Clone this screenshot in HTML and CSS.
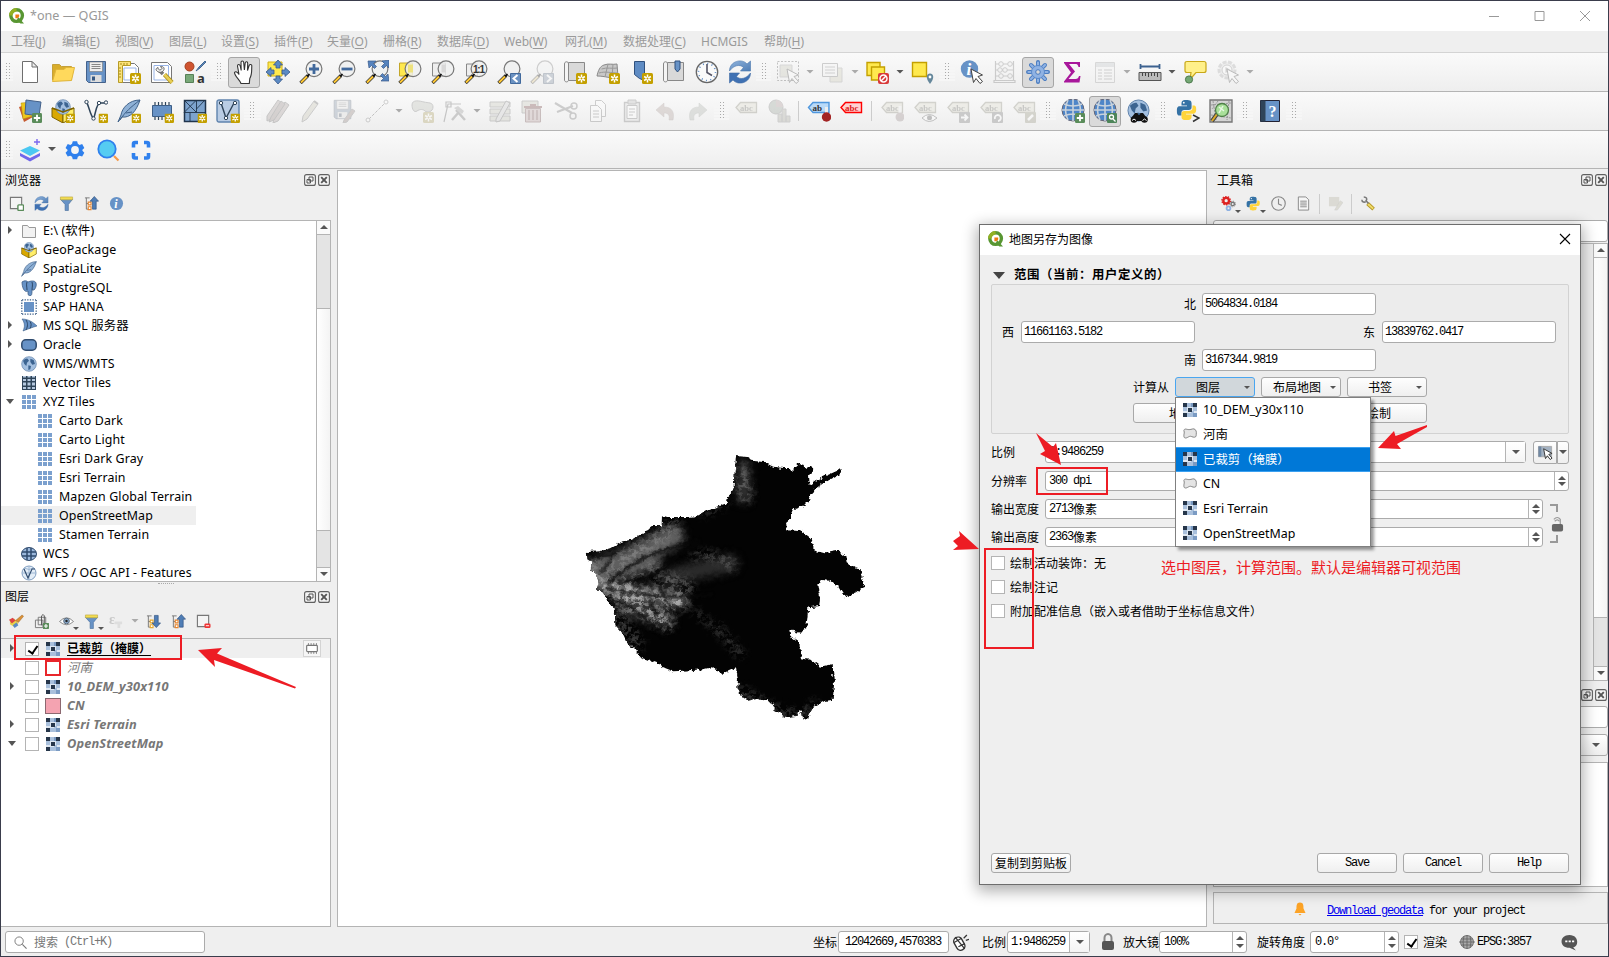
FILE: index.html
```html
<!DOCTYPE html>
<html lang="zh-CN">
<head>
<meta charset="utf-8">
<title>*one — QGIS</title>
<link rel="stylesheet" href="styles.css">
</head>
<body>
<svg class="defs" aria-hidden="true">
<defs>
<linearGradient id="gblue" x1="0" y1="0" x2="1" y2="1"><stop offset="0" stop-color="#8fb3dc"/><stop offset="1" stop-color="#4f7db5"/></linearGradient>
</defs>
<symbol id="logo" viewBox="0 0 16 16"><circle cx="7.6" cy="7.6" r="5.8" fill="none" stroke="#589632" stroke-width="3.4"/><path d="M7.6 1.8a5.8 5.8 0 0 0-5.8 5.8" fill="none" stroke="#93b023" stroke-width="3.4"/><path d="M9 9l6 6.6h-3.6L8 12z" fill="#589632"/><path d="M6.4 6.4h3.8v2l-1.8 1.8h-2z" fill="#ee7913"/></symbol>
<symbol id="star" viewBox="0 0 11 11"><rect width="11" height="11" rx="1.5" fill="#c4a000"/><path d="M5.5 1.6v7.8M2.1 3.5l6.8 4M8.9 3.5l-6.8 4" stroke="#fff" stroke-width="1.5"/><circle cx="5.5" cy="5.5" r="1" fill="#c4a000"/></symbol>
<symbol id="plusb" viewBox="0 0 11 11"><rect width="11" height="11" rx="1.5" fill="#5a8c5a"/><path d="M5.5 2v7M2 5.5h7" stroke="#fff" stroke-width="2"/></symbol>
<symbol id="new" viewBox="0 0 24 24"><path d="M4.500 1.500h9.500l5.500 5.500v15.500h-15z" fill="#fff" stroke="#6e6e6e"/><path d="M14 1.500V7h5.500z" fill="#eee" stroke="#6e6e6e"/></symbol>
<symbol id="open" viewBox="0 0 24 24"><path d="M1.500 20V4.500h7l2 2h10V20z" fill="#d9ad2b" stroke="#c4a03a"/><path d="M1.500 21.500L5 9.500h8l2-2h8.500l-3 13z" fill="#ffd95c" stroke="#e0b53a"/></symbol>
<symbol id="save" viewBox="0 0 24 24"><path d="M2.500 1.500h19v21H4.500l-2-2z" fill="#6792c6" stroke="#44618a"/><path d="M5.500 2h13v9.500h-13z" fill="#eee" stroke="#777" stroke-width=".6"/><path d="M7.500 4.500h9M7.500 6.500h9M7.500 8.500h9" stroke="#888"/><path d="M6.500 15h11v7h-11z" fill="#ddd"/><path d="M8 16.500h3v4H8z" fill="#355883"/></symbol>
<symbol id="layout" viewBox="0 0 24 24"><path d="M3.500 3.500h14l4 4v15h-18z" fill="#fff" stroke="#777"/><path d="M7 8h12v12H7z" fill="#fff" stroke="#99b5e8"/><path d="M1.500 1.500h12v4h-8v17h-4z" fill="#fbe37a" stroke="#b69b26"/><path d="M4 3v2M7 3v2M10 3v2M2 8h2M2 11h2M2 14h2M2 17h2" stroke="#a88b17"/><use href="#star" x="13" y="13" width="11" height="11"/></symbol>
<symbol id="manager" viewBox="0 0 24 24"><path d="M1.500 2.500h16l4 4v16h-20z" fill="#fff" stroke="#777"/><path d="M4 5.500h14.500v14.500H4z" fill="#fff" stroke="#99b5e8"/><path d="M13 14l-3.500-3.500" stroke="#777" stroke-width="3.500"/><path d="M8 7.500c0 3 3 3 4 1l-1.500-2c3-.5 4.500 2 3 4s-4 2.500-6 1-2-3 .5-4z" fill="#eee" stroke="#666"/><path d="M14.500 14.500l7.500 8" stroke="#a88b17" stroke-width="4.200"/><path d="M14.500 14.500l7.500 8" stroke="#e8cf55" stroke-width="2.600"/></symbol>
<symbol id="style" viewBox="0 0 24 24"><circle cx="6.500" cy="6.500" r="4.500" fill="#cf5430" stroke="#a3401f"/><path d="M13 11l3-4 6-6 1 1-6 6z" fill="#5b87b8" stroke="#466a94"/><path d="M2.500 14.500h8v8h-8z" fill="#78a878" stroke="#568056"/><text x="14" y="23" font-size="13" fill="#333" font-family="Noto Sans">a</text></symbol>
<symbol id="hand" viewBox="0 0 24 24"><path d="M9 23.500C8 20 2.500 16 2.500 12.500c1-1.500 3-.5 4.500 2L5.500 6c0-2 2.300-2 2.700 0l1 4.500L9 2.500c0-2 2.500-2 2.700 0l.7 7.500.8-7c.3-1.800 2.500-1.500 2.500.3L15.500 10.500l1.700-5.200c.7-1.500 2.800-.8 2.600.7-.3 4 .5 8.500-2 12.500l-.5 5z" fill="#fff" stroke="#333" stroke-width="1.100"/></symbol>
<symbol id="pansel" viewBox="0 0 24 24"><path d="M2 2h14v14H2z" fill="#ffe94e" stroke="#d0b018"/><path d="M12 0l4.500 5H14v3h-4V5H7.500zM12 24l4.500-5H14v-3h-4v3H7.500zM0 12l5-4.500V10h3v4H5v2.500zM24 12l-5-4.500V10h-3v4h3v2.500z" fill="#5b8ac4" stroke="#38598a" stroke-width=".8"/></symbol>
<symbol id="mag" viewBox="0 0 24 24"><path d="M9 15.500L1.500 23" stroke="#333" stroke-width="3.400"/><path d="M8 16.500L2 22.500" stroke="#ffc833" stroke-width="2"/><circle cx="15" cy="8.800" r="7.900" fill="#eef0f0" fill-opacity=".85" stroke="#777" stroke-width="1.200"/><path d="M7.500 15.500l2.500-2 1 1-2 2.500z" fill="#111"/></symbol>
<symbol id="zin" viewBox="0 0 24 24"><use href="#mag"/><path d="M15 4v10M10 9h10" stroke="#41699c" stroke-width="2.800"/></symbol>
<symbol id="zout" viewBox="0 0 24 24"><use href="#mag"/><path d="M9.500 9h11" stroke="#41699c" stroke-width="2.800"/></symbol>
<symbol id="zfull" viewBox="0 0 24 24"><use href="#mag"/><path d="M3 1h8L8.500 3.500l3 3-2 2-3-3L4 8zM24 0v8l-2.500-2.500-3 3-2-2 3-3L17 1zM24 21h-8l2.500-2.500-3-3 2-2 3 3L23 14z" fill="#5683bd" stroke="#38598a" stroke-width=".7"/></symbol>
<symbol id="zsel" viewBox="0 0 24 24"><path d="M1.500 3h13v13h-13z" fill="#ffe94e" stroke="#c4a72a"/><use href="#mag"/><path d="M10 4.500h5v8h-5z" fill="#eee27e"/></symbol>
<symbol id="zlay" viewBox="0 0 24 24"><path d="M1.500 3h13v13h-13z" fill="#eee" stroke="#888"/><use href="#mag"/><path d="M10.500 4.500h4.500v8h-4.500z" fill="#d8d8d8"/></symbol>
<symbol id="znat" viewBox="0 0 24 24"><path d="M2.500 4h11v12h-11z" fill="#eee" stroke="#888"/><use href="#mag"/><text x="9" y="12.600" font-size="10" font-weight="bold" fill="#333" font-family="Liberation Sans" textLength="12">1:1</text></symbol>
<symbol id="zlast" viewBox="0 0 24 24"><use href="#mag"/><path d="M13.500 13.500h10v10h-10z" fill="#6b92c2" stroke="#41699c"/><path d="M20.500 15l-4 3.500 4 3.500" stroke="#fff" stroke-width="2" fill="none"/></symbol>
<symbol id="znext" viewBox="0 0 24 24"><use href="#mag"/><path d="M13.500 13.500h10v10h-10z" fill="#6b92c2" stroke="#41699c"/><path d="M17 15l4 3.500-4 3.500" stroke="#fff" stroke-width="2" fill="none"/></symbol>
<symbol id="sheet" viewBox="0 0 24 24"><path d="M5.500 2.500h16v18h-16z" fill="#d9d9d9" stroke="#888"/><path d="M1.500 4c0-3 4-3 4 0v16c0 2.500-4 2.500-4 0z" fill="#f4f4f4" stroke="#888"/></symbol>
<symbol id="newmap" viewBox="0 0 24 24"><use href="#sheet"/><use href="#star" x="13" y="13" width="11" height="11"/></symbol>
<symbol id="new3d" viewBox="0 0 24 24"><path d="M8 5c5-2 8 0 13-1l1 13c-8 2-12-1-21-1 1-5 3-10 7-11z" fill="#c8c8c8" stroke="#888"/><path d="M5.500 9c6-2 10 0 16-1M3 13c7-2 11 0 19 0M12 4L9 17M17 4l-1 14" stroke="#999" fill="none"/><use href="#star" x="13" y="13" width="11" height="11"/></symbol>
<symbol id="bmnew" viewBox="0 0 24 24"><path d="M5.500 1.500h10v19l-5-2-5-4z" fill="#5f8cc4" stroke="#30517e"/><use href="#star" x="13" y="13" width="11" height="11"/></symbol>
<symbol id="bm" viewBox="0 0 24 24"><use href="#sheet"/><path d="M13 1h5v8l-2.500 3L13 9z" fill="#6792c6" stroke="#30517e"/></symbol>
<symbol id="clock" viewBox="0 0 24 24"><circle cx="12" cy="12" r="10.700" fill="#fafafa" stroke="#666" stroke-width="1.300"/><circle cx="12" cy="12" r="8.500" fill="none" stroke="#5b8ac4" stroke-dasharray="1 3.450" stroke-width="1.600"/><path d="M12 4v8.500l5 3" fill="none" stroke="#556" stroke-width="1.600"/></symbol>
<symbol id="refresh" viewBox="0 0 24 24"><path d="M1.500 11C1.500 1 14-2 19 4l3.500-3v10H12.500l3-3.500C12 4 6 5 1.500 11z" fill="url(#gblue)" stroke="#4876ac" stroke-width=".6"/><path d="M22.500 13C22.500 23 10 26 5 20l-3.500 3V13h10l-3 3.500c3.500 3.500 9.500 2.500 14-3.500z" fill="#3f71b3" stroke="#3f6ba5" stroke-width=".6"/></symbol>
<symbol id="cur" viewBox="0 0 24 24"><path d="M11 9l11.500 6-4.500 1.500 4.500 5-2.500 2-4-5-2.500 4z" fill="#fff" stroke="#444"/></symbol>
<symbol id="selrect" viewBox="0 0 24 24"><path d="M1.500 1.500h21v19h-21z" fill="none" stroke="#555" stroke-dasharray="2 1.500"/><path d="M4 5h12v12H4z" fill="#c9c8a4" stroke="#999"/><use href="#cur"/></symbol>
<symbol id="selform" viewBox="0 0 24 24"><path d="M9 8h12v14H9z" fill="#d5d29d" stroke="#999"/><path d="M1.500 3.500h15v13h-15z" fill="#f4f4f4" stroke="#777"/><path d="M4 7h10M4 10h10M4 13h10" stroke="#888"/></symbol>
<symbol id="desel" viewBox="0 0 24 24"><path d="M1 2.500h13v13H1z" fill="#ffe94e" stroke="#c4a000" stroke-width="1.400"/><path d="M5.500 7h13v13h-13z" fill="#ffe94e" stroke="#c4a000" stroke-width="1.400"/><rect x="12" y="13" width="11" height="11" rx="2" fill="#d83a3a"/><circle cx="17.500" cy="18.500" r="3.500" fill="none" stroke="#fff" stroke-width="1.500"/><path d="M15 21l5-5" stroke="#fff" stroke-width="1.500"/></symbol>
<symbol id="selval" viewBox="0 0 24 24"><path d="M1.500 2.500h14v14h-14z" fill="#ffe94e" stroke="#c4a000" stroke-width="1.400"/><path d="M19 24c-5-6-3.500-10.500 0-10.500S24 18 19 24z" fill="#65879b"/><circle cx="19" cy="17" r="1.400" fill="#fff"/></symbol>
<symbol id="ident" viewBox="0 0 24 24"><circle cx="9.500" cy="9" r="8.700" fill="#6792c6"/><text x="6.500" y="15" font-size="17" font-style="italic" font-weight="bold" font-family="Liberation Serif" fill="#fff">i</text><use href="#cur"/></symbol>
<symbol id="abacus" viewBox="0 0 24 24"><path d="M2.500 1v20M20.500 1v20M2 4h19M2 10h19M2 16h19M1 20.500h21v2H1z" fill="none" stroke="#777" stroke-width="1.200"/><g fill="#eee" stroke="#777"><circle cx="8" cy="4" r="2.300" /><circle cx="17" cy="4" r="2.300"/><circle cx="7" cy="10" r="2.300"/><circle cx="12" cy="10" r="2.300"/><circle cx="8" cy="16" r="2.300"/><circle cx="17" cy="16" r="2.300"/></g></symbol>
<symbol id="gear" viewBox="0 0 24 24"><path d="M12 2v20M2 12h20M5 5l14 14M19 5L5 19" stroke="#4a7cc0" stroke-width="4" stroke-linecap="round"/><path d="M12 2.500v19M2.500 12h19M5 5l14 14M19 5L5 19" stroke="#8fb2e3" stroke-width="2.200" stroke-linecap="round"/><circle cx="12" cy="12" r="6.500" fill="#8fb2e3" stroke="#5a8acb"/><circle cx="12" cy="12" r="2.300" fill="#d8d8d8" stroke="#4a7cc0"/></symbol>
<symbol id="sigma" viewBox="0 0 24 24"><path d="M4 2h16v5h-1.500C18 4.500 17 4 15 4H9l6 7.500L8.500 19h7c2 0 3-1 3.500-3h1.500l-1 6.500H4v-1L11 12.500 4 3z" fill="#a8179b"/></symbol>
<symbol id="table" viewBox="0 0 24 24"><path d="M2.500 2.500h19v20h-19z" fill="#f4f4f4" stroke="#999"/><path d="M3 3h18v4H3z" fill="#b9c4cc"/><path d="M5 10h4M5 13h4M5 16h4M5 19h4M11 10h8M11 13h8M11 16h8M11 19h8" stroke="#aaa" stroke-width="1.300"/></symbol>
<symbol id="ruler" viewBox="0 0 24 24"><path d="M2 6.500h20M2.500 4v5M21.500 4v5" stroke="#3c618f" stroke-width="1.800"/><path d="M1 12.500h22v8H1z" fill="#bbb" stroke="#555"/><path d="M4.500 13v3M7.500 13v3M10.500 13v4M13.500 13v3M16.500 13v3M19.500 13v4" stroke="#444"/></symbol>
<symbol id="tips" viewBox="0 0 24 24"><path d="M4 1.500h17q2 0 2 2v7q0 2-2 2h-8l-6 7 1-7H4q-2 0-2-2v-7q0-2 2-2z" fill="#fff08a" stroke="#c9a818" stroke-width="1.200"/><circle cx="6" cy="19.500" r="3.600" fill="#74a874" stroke="#4c794c"/></symbol>
<symbol id="action" viewBox="0 0 24 24"><circle cx="11" cy="10" r="8" fill="#ddd" stroke="#aaa" stroke-width="3" stroke-dasharray="4 1.500"/><circle cx="11" cy="10" r="5" fill="#fff" stroke="#888"/><path d="M9.500 7l5 3-5 3z" fill="#888"/><use href="#cur"/></symbol>
<symbol id="dsm" viewBox="0 0 24 24"><path d="M1 8l9-3 5 13-9 5z" fill="#c65a30"/><path d="M3 4l11-1 1 14-10 3z" fill="#edc61b" stroke="#b08d10" stroke-width=".5"/><path d="M8 1l15 2-2 14-14-2z" fill="#6792c6" stroke="#44618a"/><use href="#plusb" x="14" y="14" width="10" height="10"/></symbol>
<symbol id="globe" viewBox="0 0 24 24"><circle cx="12" cy="12" r="11" fill="#a4c0e0" stroke="#5d7fa8"/><path d="M3 7q4-4 7-3l2 3-3 3-1 5-3-3zM14 4l5 2 2 6-4 1-3-4zM11 14l4 1-1 5-3 1z" fill="#3c6491"/></symbol>
<symbol id="gpkgs" viewBox="0 0 24 24"><path d="M1 9l11 4v11L1 18z" fill="#d9a800" stroke="#7c6200"/><path d="M23 9l-11 4v11l11-6z" fill="#ffee6a" stroke="#7c6200"/><use href="#globe" x="4" y="0" width="16" height="16"/><path d="M1 9l11 4 11-4" fill="none" stroke="#7c6200" stroke-width="1.400"/></symbol>
<symbol id="gpkg" viewBox="0 0 24 24"><use href="#gpkgs"/><use href="#star" x="14.500" y="14.500" width="9.500" height="9.500"/></symbol>
<symbol id="vee" viewBox="0 0 24 24"><path d="M2.500 3c2 3 4 14 7 16.500C12 14 12 5 16 4M15 4h7" fill="none" stroke="#2f4459" stroke-width="1.500"/><g fill="#fff" stroke="#2f4459"><circle cx="2.500" cy="3" r="1.700"/><circle cx="9.500" cy="19.500" r="1.700"/><circle cx="15" cy="4" r="1.700"/><circle cx="22" cy="3.500" r="1.700"/></g></symbol>
<symbol id="newshp" viewBox="0 0 24 24"><use href="#vee"/><use href="#star" x="14.500" y="14.500" width="9.500" height="9.500"/></symbol>
<symbol id="feather" viewBox="0 0 24 24"><path d="M23 1C12 1 5 9 4 16l-3 7 4-5c8 1 14-5 18-17z" fill="#8fb1d6" stroke="#3f6189"/><path d="M23 1C14 8 8 13 3 21M9 14l6-1" fill="none" stroke="#3f6189"/></symbol>
<symbol id="newspl" viewBox="0 0 24 24"><use href="#feather"/><use href="#star" x="14.500" y="14.500" width="9.500" height="9.500"/></symbol>
<symbol id="newmem" viewBox="0 0 24 24"><path d="M5 3v18M8.500 3v18M12 3v18M15.500 3v18M19 3v18" stroke="#2f4459" stroke-width="1.200"/><path d="M2.500 6.500h19v11h-19z" fill="#6792c6" stroke="#3d5e86"/><use href="#star" x="14.500" y="14.500" width="9.500" height="9.500"/></symbol>
<symbol id="newmesh" viewBox="0 0 24 24"><path d="M1.500 1.500h21v21h-21z" fill="#7da3ce" stroke="#20344c" stroke-width="1.500"/><path d="M1 13.500h22M13.500 1v12.500M7 13.500V23M1 1l12.500 12.500M13.500 1L1 13.500M13.500 10L22 1" stroke="#20344c" stroke-width=".9"/><use href="#star" x="14.500" y="14.500" width="9.500" height="9.500"/></symbol>
<symbol id="newvirt" viewBox="0 0 24 24"><rect x="1" y="1" width="22" height="22" rx="2" fill="#b9cce4" stroke="#5f83ad" stroke-width="1.400"/><path d="M5 4l5 15L18 4" fill="none" stroke="#2f4459" stroke-width="1.400"/><g fill="#fff" stroke="#2f4459"><circle cx="5" cy="4" r="1.700"/><circle cx="10" cy="19" r="1.700"/><circle cx="19" cy="4" r="1.700"/></g><use href="#star" x="14.500" y="14.500" width="9.500" height="9.500"/></symbol>
<symbol id="pencil" viewBox="0 0 24 24"><path d="M4 17L15 2l4 3L8 20l-5 3z" fill="#c9c49a" stroke="#777"/><path d="M15 2l4 3" stroke="#666" stroke-width="2"/></symbol>
<symbol id="pencils" viewBox="0 0 24 24"><path d="M1 17L12 1l4 3L5 20l-4 2zM8 19L19 3l4 3-11 16-5 2z" fill="#b59a94" stroke="#666"/><path d="M5 18L15 2l4 3L8 21l-5 2z" fill="#a4877f" stroke="#666"/></symbol>
<symbol id="savee" viewBox="0 0 24 24"><use href="#save" width="21" height="21"/><path d="M12 21l8-11 3 2-8 11-4 1z" fill="#a87c72" stroke="#777"/></symbol>
<symbol id="addline" viewBox="0 0 24 24"><path d="M4 20L20 4" stroke="#555" stroke-dasharray="3 1.500"/><g fill="#fff" stroke="#777"><circle cx="3" cy="21" r="2"/><circle cx="21" cy="3" r="2"/></g></symbol>
<symbol id="poly" viewBox="0 0 24 24"><path d="M2 6c0-6 8-4 12-3s9 0 9 5-6 6-8 4-5-2-8 0-5-2-5-6z" fill="#bcc0ab" stroke="#777"/><use href="#star" x="13" y="13" width="11" height="11"/></symbol>
<symbol id="vertex" viewBox="0 0 24 24"><path d="M1 23L5 5h13M3 3h5v5H3z" fill="none" stroke="#666" stroke-width="1.200"/><path d="M9 21l7-8M13 11l9 10" stroke="#777" stroke-width="2.500"/><path d="M11 9l4-2 6 5-2 3z" fill="#999"/></symbol>
<symbol id="multi" viewBox="0 0 24 24"><path d="M2 3h20v5H2zM2 10h20v5H2zM2 17h20v5H2z" fill="#c7c9a7" stroke="#777"/><path d="M8 20L18 2l4 2-10 18-4 1z" fill="#ccc" stroke="#666"/></symbol>
<symbol id="trash" viewBox="0 0 24 24"><path d="M1 2h16v12H1z" fill="#c7c9a7" stroke="#777"/><path d="M3 8h18M9 6h6" stroke="#a33" stroke-width="2"/><path d="M4.500 9.500h15V23h-15z" fill="#d69a9a" stroke="#944"/><path d="M8 11v10M12 11v10M16 11v10" stroke="#944" stroke-width="1.500"/></symbol>
<symbol id="cut" viewBox="0 0 24 24"><path d="M1 4l17 10M3 13l16-6" stroke="#777" stroke-width="2.200"/><circle cx="20" cy="7" r="3" fill="none" stroke="#777" stroke-width="1.500"/><circle cx="19" cy="17" r="3" fill="none" stroke="#777" stroke-width="1.500"/></symbol>
<symbol id="copy" viewBox="0 0 24 24"><path d="M8.500 1.500h6l4 4v12h-10z" fill="#fff" stroke="#777"/><path d="M3.500 6.500h7l4 4v12h-11z" fill="#fff" stroke="#777"/><path d="M6 12h6M6 15h6M6 18h6" stroke="#777"/></symbol>
<symbol id="paste" viewBox="0 0 24 24"><path d="M4.500 3.500h15v19h-15z" fill="#ddd" stroke="#777" stroke-width="1.400"/><path d="M7 6.500h10v13H7z" fill="#fff" stroke="#777"/><path d="M8 1h8v4H8z" fill="#bbb" stroke="#777"/><path d="M9 10h6M9 13h6M9 16h4" stroke="#777"/></symbol>
<symbol id="undo" viewBox="0 0 24 24"><path d="M3 11l8-7v4c7 0 11 4 9 13h-4c1-5-1-7-5-7v4z" fill="#c49a8e" stroke="#9a7a70" stroke-width=".5"/></symbol>
<symbol id="redo" viewBox="0 0 24 24"><path d="M21 11l-8-7v4C6 8 2 12 4 21h4c-1-5 1-7 5-7v4z" fill="#aab5a6" stroke="#86917f" stroke-width=".5"/></symbol>
<symbol id="tag" viewBox="0 0 24 24"><path d="M2 8.500L6.500 3.500h16v10h-16z" fill="#dedbb4" stroke="#8b8862" stroke-width="1.300"/><text x="6" y="11.500" font-size="8.500" font-weight="bold" font-family="Liberation Serif" fill="#665">abc</text></symbol>
<symbol id="diag" viewBox="0 0 24 24"><circle cx="9" cy="8" r="7" fill="#8aa58a" stroke="#777"/><path d="M9 1a7 7 0 0 1 7 7H9z" fill="#c09090"/><path d="M11 15h4v8h-4zM15 10h4v13h-4zM19 17h4v6h-4z" fill="#a9a98f" stroke="#888"/></symbol>
<symbol id="tagblue" viewBox="0 0 24 24"><path d="M1.500 8.500L6 3.500h16v10H6z" fill="#b9daf8" stroke="#4f97dd" stroke-width="1.400"/><text x="5.500" y="11.500" font-size="9" font-weight="bold" font-family="Liberation Serif" fill="#333">ab</text><path d="M19.500 8v9" stroke="#eee" stroke-width="3"/><circle cx="19.500" cy="18" r="4.700" fill="#a32424"/></symbol>
<symbol id="tagred" viewBox="0 0 24 24"><path d="M1 8.500L5.500 3.500h16v10h-16z" fill="#ffd2d2" stroke="#f00" stroke-width="1.400"/><text x="5" y="11.500" font-size="9" font-weight="bold" font-family="Liberation Serif" fill="#e02020">abc</text></symbol>
<symbol id="tagpin" viewBox="0 0 24 24"><use href="#tag"/><path d="M20 7v9" stroke="#eee" stroke-width="3"/><circle cx="20" cy="18" r="4.500" fill="#a88"/></symbol>
<symbol id="tageye" viewBox="0 0 24 24"><use href="#tag"/><path d="M9 19q7-7 15 0-8 7-15 0z" fill="#fff" stroke="#555"/><circle cx="16.500" cy="18.700" r="2.500" fill="#555"/></symbol>
<symbol id="tagmove" viewBox="0 0 24 24"><use href="#tag"/><rect x="13" y="13" width="11" height="11" rx="1" fill="#777"/><path d="M15 18.500h6M18.500 15.500l3 3-3 3" stroke="#fff" stroke-width="1.800" fill="none"/></symbol>
<symbol id="tagrot" viewBox="0 0 24 24"><use href="#tag"/><rect x="13" y="13" width="11" height="11" rx="1" fill="#777"/><path d="M16 20a3 3 0 1 1 3 2" stroke="#fff" stroke-width="1.800" fill="none"/></symbol>
<symbol id="tagedit" viewBox="0 0 24 24"><use href="#tag"/><rect x="13" y="13" width="11" height="11" rx="1" fill="#9a9664"/><path d="M16 21l5-5" stroke="#fff" stroke-width="2.500"/></symbol>
<symbol id="earth" viewBox="0 0 24 24"><circle cx="12" cy="11" r="11" fill="#4f86c8" stroke="#667"/><path d="M3 5q9 4 18 0M1 11h22M3 17q9-4 18 0M12 0v22M7 1q-5 10 0 20M17 1q5 10 0 20" fill="none" stroke="#c8d2dc" stroke-width="1.600"/></symbol>
<symbol id="earthadd" viewBox="0 0 24 24"><use href="#earth"/><use href="#plusb" x="14" y="14" width="10" height="10"/></symbol>
<symbol id="earthfind" viewBox="0 0 24 24"><use href="#earth"/><rect x="14" y="14" width="10" height="10" rx="1" fill="#4d8559"/><circle cx="18.500" cy="18" r="2" fill="none" stroke="#fff" stroke-width="1.300"/><path d="M20 20l2.500 2.500" stroke="#fff" stroke-width="1.300"/></symbol>
<symbol id="binoc" viewBox="0 0 24 24"><use href="#globe" width="23" height="23"/><path d="M5 18l3-4h2.500l1 2h1l1-2H16l3 4v4H5z" fill="#111"/><circle cx="7" cy="20.500" r="3.300" fill="#111"/><circle cx="17.500" cy="20.500" r="3.300" fill="#111"/><path d="M5 21.500q2-3 4 0M15.500 21.500q2-3 4 0" stroke="#fff" fill="none"/></symbol>
<symbol id="python" viewBox="0 0 24 24"><path d="M11 1c-5 0-5 2-5 5v1h6v1H4c-3 0-3 3-3 5s0 5 3 5h2v-3c0-2 1-3 3-3h5c2 0 3-1 3-3V5c0-3-1-4-6-4z" fill="#3572a5"/><path d="M12 23c5 0 5-2 5-5v-1h-6v-1h8c3 0 3-3 3-5s0-4-3-4h-1v3c0 2-2 3-4 3H9c-2 0-3 1-3 3v3c0 3 1 4 6 4z" fill="#ffd43b"/><circle cx="8.500" cy="4" r="1" fill="#fff"/></symbol>
<symbol id="pyc" viewBox="0 0 24 24"><use href="#python" width="22" height="22"/><path d="M17 16l6 3-6 3.500" fill="none" stroke="#333" stroke-width="1.500"/></symbol>
<symbol id="osmf" viewBox="0 0 24 24"><path d="M1 1h22v22H1z" fill="#d4d4d4" stroke="#777" stroke-width="1.400"/><path d="M4 2l3 19M20 2l-2 19M2 6l20-2M2 16l20 3M9 2l-6 8" stroke="#999" stroke-dasharray="2 1"/><path d="M8 15l-5 7" stroke="#444" stroke-width="4"/><path d="M8 15l-5 7" stroke="#dba92a" stroke-width="2"/><circle cx="13" cy="11" r="6.500" fill="#a9e09a" stroke="#4f8048" stroke-width="1.300"/><path d="M10 8l5 4M14 7l-4 7" stroke="#e8f7e4" stroke-width="1.500"/></symbol>
<symbol id="help" viewBox="0 0 24 24"><path d="M2.500 1.500h19v21h-19z" fill="#6792c6" stroke="#223"/><path d="M2.500 1.500h5v21h-5z" fill="#2f4459"/><text x="10.500" y="17.500" font-size="16" fill="#fff" font-family="Liberation Serif">?</text></symbol>
<symbol id="hlayers" viewBox="0 0 24 24"><path d="M2 15l10 5 10-5v3l-10 5.500L2 18z" fill="#6f66ea"/><path d="M12 8l10 4.500-10 5.500-10-5.500z" fill="#4bc8f2"/><path d="M19 1v6M16 4h6" stroke="#7b68ee" stroke-width="1.400"/></symbol>
<symbol id="hgear" viewBox="0 0 24 24"><path d="M9.500 2h5l.8 3 2 1.200 3-.9 2.500 4.400-2.200 2.200v1l2.200 2.200-2.500 4.400-3-.9-2 1.200-.8 3h-5l-.8-3-2-1.200-3 .9-2.500-4.400 2.200-2.200v-1L1.200 9.700l2.500-4.400 3 .9 2-1.200z" fill="#2f80ed" transform="translate(1.500 1.500) scale(.87)"/><circle cx="12" cy="12" r="3.900" fill="#f5f5f5"/></symbol>
<symbol id="hmag" viewBox="0 0 24 24"><path d="M18 18l4.500 4.500" stroke="#f59a4a" stroke-width="2.200"/><circle cx="11" cy="11" r="8.700" fill="#55ccf2" stroke="#2f80ed" stroke-width="1.800"/></symbol>
<symbol id="hfull" viewBox="0 0 24 24"><path d="M9 4.500H6A1.500 1.500 0 0 0 4.500 6v3.500M15 4.500h3A1.500 1.500 0 0 1 19.500 6v3.500M9 20H6a1.500 1.500 0 0 1-1.500-1.500V15M15 20h3a1.500 1.500 0 0 0 1.500-1.500V15" fill="none" stroke="#2f80ed" stroke-width="3.600"/></symbol>
<symbol id="float" viewBox="0 0 12 12"><rect x=".6" y=".6" width="10.800" height="10.800" rx="2" fill="#f4f4f4" stroke="#606060" stroke-width="1.100"/><path d="M5 3h4v4H5zM3 5.500h3.500V9H3z" fill="#f4f4f4" stroke="#555"/></symbol>
<symbol id="closeb" viewBox="0 0 12 12"><rect x=".6" y=".6" width="10.800" height="10.800" rx="2" fill="#f4f4f4" stroke="#606060" stroke-width="1.100"/><path d="M3.200 3.200l5.600 5.600M8.800 3.200L3.200 8.800" stroke="#555" stroke-width="1.900"/></symbol>
<symbol id="addsq" viewBox="0 0 16 16"><path d="M1.500 1.500h12v12h-12z" fill="#f4f4f4" stroke="#777" stroke-width="1.200"/><rect x="9.500" y="9.500" width="6" height="6" rx="1" fill="#fff" stroke="#5a8c5a" stroke-width="1.500"/></symbol>
<symbol id="remsq" viewBox="0 0 16 16"><path d="M1.500 1.500h12v12h-12z" fill="#f4f4f4" stroke="#777" stroke-width="1.200"/><rect x="9" y="10" width="6.500" height="5" rx="1.500" fill="#e33"/><path d="M10.500 12.500h3.500" stroke="#fff"/></symbol>
<symbol id="filter" viewBox="0 0 16 16"><path d="M1.500 3.500h13L10 9v6.500H6.500V9z" fill="#6792c6" stroke="#4b719e" stroke-width=".7"/><path d="M1.500 1h13v3h-13z" fill="#f2dc52" stroke="#b8a43a" stroke-width=".6"/></symbol>
<symbol id="collapse" viewBox="0 0 16 16"><path d="M1 2h5M2.500 2v12H6M2.500 8H6" fill="none" stroke="#777"/><path d="M4.500 6.500h3v3h-3zM4.500 11.500h3v3h-3z" fill="#fff" stroke="#e8862e" stroke-width="1.200"/><path d="M11 .5l4.500 5H13V14H9V5.500H6.500z" fill="#4f7db5" stroke="#30517e" stroke-width=".7"/></symbol>
<symbol id="expand" viewBox="0 0 16 16"><path d="M1 2h5M2.500 2v12H6M2.500 8H6" fill="none" stroke="#777"/><path d="M4.500 6.500h3v3h-3zM4.500 11.500h3v3h-3z" fill="#fff" stroke="#e8a92e" stroke-width="1.200"/><path d="M11 14.500l4.500-5H13V1.500H9v8H6.500z" fill="#4f7db5" stroke="#30517e" stroke-width=".7"/></symbol>
<symbol id="info" viewBox="0 0 16 16"><circle cx="8" cy="8" r="7" fill="#6792c6"/><text x="5.500" y="12.500" font-size="13" font-style="italic" font-weight="bold" font-family="Liberation Serif" fill="#fff">i</text></symbol>
<symbol id="folder" viewBox="0 0 16 16"><path d="M1.500 14.500v-12h5l1.500 2h6.500v10z" fill="#f2f2f2" stroke="#999"/></symbol>
<symbol id="pg" viewBox="0 0 16 16"><path d="M1 2c3-2 5-1 6 0 2-1 7-2 8 1 1 3-1 6-2 7h-2c0 2 0 5-1 5.500-1 .5-3 .5-3-2V11c-4 2-6-4-6-9z" fill="#6792c6" stroke="#3d5e86" stroke-width=".8"/><path d="M6 2c-1 3 0 5 0 8M11 2c1 3 0 5 0 8" stroke="#2c4766" fill="none"/></symbol>
<symbol id="hana" viewBox="0 0 16 16"><path d="M3 3h10v10H3z" fill="#6792c6"/><path d="M.8 1v14M15.200 1v14M1 .8h14M1 15.200h14" stroke="#3d5e86" stroke-width="1.300" stroke-dasharray="1.300 1.300"/></symbol>
<symbol id="mssql" viewBox="0 0 16 16"><path d="M1 1c6 0 11 3 15 7-4 1-9 3-14 5 2-4 2-8-1-12z" fill="#6792c6" stroke="#3d5e86" stroke-width=".6"/><path d="M5 2c2 3 2 6 0 10M9 3.500c1.500 2 1.500 4 0 7" fill="none" stroke="#2c4766"/></symbol>
<symbol id="ora" viewBox="0 0 16 16"><rect x=".8" y="2.800" width="14.400" height="10.400" rx="4" fill="#6792c6" stroke="#2f4b6e" stroke-width="1.500"/></symbol>
<symbol id="vt" viewBox="0 0 16 16"><path d="M1 1h14v14H1z" fill="#2f4459"/><path d="M2 4h3v2H2zM6.500 4h3v2h-3zM11 4h3v2h-3zM2 7.500h3v3H2zM6.500 7.500h3v3h-3zM11 7.500h3v3h-3zM2 12h3v2H2zM6.500 12h3v2h-3zM11 12h3v2h-3zM2 1h3v1.500H2zM6.500 1h3v1.500h-3zM11 1h3v1.500h-3z" fill="#b4c7de"/></symbol>
<symbol id="xyz" viewBox="0 0 16 16"><path d="M1 1h4v4H1zM6 1h4v4H6zM11 1h4v4h-4zM1 6h4v4H1zM6 6h4v4H6zM11 6h4v4h-4zM1 11h4v4H1zM6 11h4v4H6zM11 11h4v4h-4z" fill="#7ba0ce"/></symbol>
<symbol id="wcs" viewBox="0 0 16 16"><ellipse cx="8" cy="8" rx="7.500" ry="6.500" fill="#9bb8dc" stroke="#2f4b6e"/><path d="M1 6h14M1 10h14M6 2v12M10 2v12" stroke="#2f4b6e" stroke-width="1.500"/></symbol>
<symbol id="wfs" viewBox="0 0 16 16"><circle cx="8" cy="8" r="7" fill="#e3edf7" stroke="#7f9dc0"/><path d="M1 8h14M8 1v14M3 3q5 3 10 0" stroke="#9db7d4" fill="none"/><path d="M3 4l4 9 4-9h3" fill="none" stroke="#2f4b6e" stroke-width="1.200"/></symbol>
<symbol id="raster" viewBox="0 0 14 14"><path d="M0 0h14v14H0z" fill="#dfe8f2"/><path d="M4 0h4v4H4zM0 4h4v4H0zM10 4h4v4h-4zM4 10h4v4H4zM8 8h3v6H8z" fill="#a9c0dc"/><path d="M0 0h4v4H0zM10 0h4v4h-4zM5 5h4v4H5zM0 10h4v4H0z" fill="#26364a"/><path d="M8 0h2v4H8zM10 10h4v4h-4z" fill="#7b9bc3"/></symbol>
<symbol id="polyi" viewBox="0 0 16 16"><path d="M1 4c1-3 3-1 6-1s5-2 7 0 1 5 1 7-3 2-5 1-3 0-5 1-4 1-4-2 1-3 0-6z" fill="#e4e4e4" stroke="#777"/></symbol>
<symbol id="brush" viewBox="0 0 16 16"><path d="M1 6l5-1 4 5-4 4-5-3z" fill="#e9d24c"/><path d="M0 6l4-2 3 3-4 3z" fill="#d44"/><path d="M4 12l4-3 2 3-4 3z" fill="#5b8ac4"/><path d="M7 7l7-6 1.500 1.500L10 9z" fill="#d99036" stroke="#9a6020" stroke-width=".5"/></symbol>
<symbol id="group" viewBox="0 0 16 16"><path d="M1.500 6.500h8v8h-8zM4.500 3.500h8v8h-8z" fill="none" stroke="#777"/><path d="M8 12V2q2-3 3 0v8" fill="none" stroke="#555"/><use href="#plusb" x="9.500" y="9.500" width="6.500" height="6.500"/></symbol>
<symbol id="eye" viewBox="0 0 16 16"><path d="M.5 8Q8 0 15.500 8 8 15 .5 8z" fill="#fff" stroke="#888"/><circle cx="8" cy="7.500" r="3" fill="#8bacd0" stroke="#567"/><circle cx="8" cy="7.500" r="1.300" fill="#222"/></symbol>
<symbol id="eps" viewBox="0 0 16 16"><text x="0" y="11" font-size="15" fill="#777" font-family="Liberation Serif">ε</text><path d="M6 8h8v3h-2v4H9v-4H6z" fill="#bbb"/></symbol>
<symbol id="gears" viewBox="0 0 16 16"><g stroke="#d22" fill="none"><circle cx="5.500" cy="5" r="3" stroke-width="2.500"/><circle cx="5.500" cy="5" r="4.500" stroke-dasharray="1.500 1.300" stroke-width="1.500"/></g><g stroke="#777" fill="none"><circle cx="12.500" cy="8.500" r="1.800" stroke-width="1.500"/><circle cx="12.500" cy="8.500" r="3" stroke-dasharray="1 1"/></g><circle cx="8" cy="13" r="2" fill="none" stroke="#8fb2e3" stroke-width="2"/></symbol>
<symbol id="clock2" viewBox="0 0 16 16"><circle cx="8" cy="8" r="7.200" fill="none" stroke="#888" stroke-width="1.200"/><path d="M8 3v5.500l3.500 1.500" fill="none" stroke="#888" stroke-width="1.200"/></symbol>
<symbol id="doc" viewBox="0 0 16 16"><path d="M2.500 1h8l3 3v11h-11z" fill="#f6f6f6" stroke="#888"/><path d="M4.500 5.500h7M4.500 7.500h7M4.500 9.500h7M4.500 11.500h7" stroke="#888"/></symbol>
<symbol id="wrench" viewBox="0 0 16 16"><path d="M8 8l6.500 6" stroke="#b79827" stroke-width="4"/><path d="M8.500 8.500l5.500 5" stroke="#f0dd6a" stroke-width="2"/><path d="M2 4c0 3 3 3 4 2M4 1c3 0 4 2 2.500 4L9 8" fill="none" stroke="#777" stroke-width="1.600"/></symbol>
<symbol id="editsh" viewBox="0 0 16 16"><path d="M1 1h11v10H1z" fill="#b5b380"/><path d="M7 15l6-10 3 2-6 8z" fill="#b9b57a" stroke="#888" stroke-width=".5"/></symbol>
<symbol id="lock" viewBox="0 0 14 18"><path d="M3.500 9V5a3.500 4 0 0 1 7 0v4" fill="none" stroke="#888" stroke-width="2"/><rect x="1" y="8" width="12" height="9" rx="2" fill="#555"/></symbol>
<symbol id="unlock" viewBox="0 0 14 18"><path d="M3 4q4-4 7 0v5M4 6q3-3 5 0" fill="none" stroke="#999" stroke-width="1.300"/><rect x="1" y="9" width="12" height="8" rx="2" fill="#666"/></symbol>
<symbol id="srch" viewBox="0 0 14 14"><circle cx="5.500" cy="5.500" r="4.500" fill="none" stroke="#777"/><path d="M9 9l4.500 4.500" stroke="#777" stroke-width="1.200"/></symbol>
<symbol id="mouse" viewBox="0 0 16 16"><rect x="3" y="2" width="8" height="13" rx="4" fill="#fff" stroke="#333" stroke-width="1.300" transform="rotate(-30 8 9)"/><path d="M2 8l7-4M6 12l6-3M3 3l9 11M11 4l3-3M13 6l3-1" stroke="#333" stroke-width="1.200"/></symbol>
<symbol id="crs" viewBox="0 0 16 16"><circle cx="8" cy="8" r="6.500" fill="#aaa" stroke="#777"/><path d="M0 8h16M8 1v14M2 5h12M2 11h12M5 2q-2 6 0 12M11 2q2 6 0 12" fill="none" stroke="#666" stroke-width=".9"/></symbol>
<symbol id="bubble" viewBox="0 0 16 16"><path d="M8 1c9 0 9 11 3.500 11.500L14 15.500 8 13C-2 13-2 1 8 1z" fill="#555"/><path d="M4 7h2M7.200 7h2M10.400 7h2" stroke="#fff" stroke-width="1.600"/></symbol>
<symbol id="bell" viewBox="0 0 12 14"><path d="M6 .5c3.500 0 3.500 3 3.500 6l2 4.500H.5l2-4.500c0-3 0-6 3.500-6zM4.500 12h3L6 13.500z" fill="#fca326"/></symbol>
<symbol id="extent" viewBox="0 0 18 16"><path d="M1.500 1.500h14v11h-14z" fill="#a3b1c1" stroke="#aaa"/><path d="M1.500 1.500h3v11h-3z" fill="#7189a4"/><path d="M7 4l9 5-3.500 1 3.500 4-2 1.500-3-4-2 3z" fill="#fff" stroke="#333"/></symbol>
<symbol id="mem" viewBox="0 0 18 16"><rect x="3" y="4.500" width="12" height="7" rx="1" fill="#fff" stroke="#777" stroke-width="1.300"/><path d="M5 4V2M8 4V2M11 4V2M14 4V2M5 14v-2M8 14v-2M11 14v-2M14 14v-2" stroke="#777"/></symbol>
</svg>

<div class="window">
<header class="titlebar">
<svg class="logo"><use href="#logo"/></svg><span class="wtitle">*one — QGIS</span>
<svg class="winctl" viewBox="0 0 103 12"><path d="M1 6.500h10M47 1.500h9v9h-9zM92 1l10 10M102 1L92 11" fill="none" stroke="#999"/></svg>
</header>
<nav class="menu"><span>工程(<u>J</u>)</span><span>编辑(<u>E</u>)</span><span>视图(<u>V</u>)</span><span>图层(<u>L</u>)</span><span>设置(<u>S</u>)</span><span>插件(<u>P</u>)</span><span>矢量(<u>O</u>)</span><span>栅格(<u>R</u>)</span><span>数据库(<u>D</u>)</span><span>Web(<u>W</u>)</span><span>网孔(<u>M</u>)</span><span>数据处理(<u>C</u>)</span><span>HCMGIS</span><span>帮助(<u>H</u>)</span></nav>

<div class="bar bar1"><i class="grip"></i>
<b class="t"><svg><use href="#new"/></svg></b><b class="t"><svg><use href="#open"/></svg></b><b class="t"><svg><use href="#save"/></svg></b><b class="t"><svg><use href="#layout"/></svg></b><b class="t"><svg><use href="#manager"/></svg></b><b class="t"><svg><use href="#style"/></svg></b><i class="grip g17"></i>
<b class="t on"><svg><use href="#hand"/></svg></b><b class="t"><svg><use href="#pansel"/></svg></b><b class="t"><svg><use href="#zin"/></svg></b><b class="t"><svg><use href="#zout"/></svg></b><b class="t"><svg><use href="#zfull"/></svg></b><b class="t"><svg><use href="#zsel"/></svg></b><b class="t"><svg><use href="#zlay"/></svg></b><b class="t"><svg><use href="#znat"/></svg></b><b class="t"><svg><use href="#zlast"/></svg></b><b class="t off"><svg><use href="#znext"/></svg></b><b class="t"><svg><use href="#newmap"/></svg></b><b class="t"><svg><use href="#new3d"/></svg></b><b class="t"><svg><use href="#bmnew"/></svg></b><b class="t"><svg><use href="#bm"/></svg></b><b class="t"><svg><use href="#clock"/></svg></b><b class="t"><svg><use href="#refresh"/></svg></b><i class="grip g15"></i>
<b class="t off"><svg><use href="#selrect"/></svg></b><i class="dd off"></i><b class="t off"><svg><use href="#selform"/></svg></b><i class="dd off"></i><b class="t"><svg><use href="#desel"/></svg></b><i class="dd"></i><b class="t"><svg><use href="#selval"/></svg></b><i class="grip"></i>
<b class="t"><svg><use href="#ident"/></svg></b><b class="t off wide"><svg><use href="#abacus"/></svg></b><b class="t on"><svg><use href="#gear"/></svg></b><b class="t"><svg><use href="#sigma"/></svg></b><b class="t off"><svg><use href="#table"/></svg></b><i class="dd off"></i><b class="t"><svg><use href="#ruler"/></svg></b><i class="dd"></i><b class="t"><svg><use href="#tips"/></svg></b><b class="t off"><svg><use href="#action"/></svg></b><i class="dd off"></i>
</div>
<div class="bar bar2"><i class="grip"></i>
<b class="t"><svg><use href="#dsm"/></svg></b><b class="t"><svg><use href="#gpkg"/></svg></b><b class="t"><svg><use href="#newshp"/></svg></b><b class="t"><svg><use href="#newspl"/></svg></b><b class="t"><svg><use href="#newmem"/></svg></b><b class="t"><svg><use href="#newmesh"/></svg></b><b class="t"><svg><use href="#newvirt"/></svg></b><i class="grip g17"></i>
<b class="t off"><svg><use href="#pencils"/></svg></b><b class="t off"><svg><use href="#pencil"/></svg></b><b class="t off"><svg><use href="#savee"/></svg></b><b class="t off"><svg><use href="#addline"/></svg></b><i class="dd off"></i><b class="t off"><svg><use href="#poly"/></svg></b><b class="t off"><svg><use href="#vertex"/></svg></b><i class="dd off"></i><b class="t off"><svg><use href="#multi"/></svg></b><b class="t off"><svg><use href="#trash"/></svg></b><b class="t off"><svg><use href="#cut"/></svg></b><b class="t off"><svg><use href="#copy"/></svg></b><b class="t off"><svg><use href="#paste"/></svg></b><b class="t off"><svg><use href="#undo"/></svg></b><b class="t off"><svg><use href="#redo"/></svg></b><i class="grip g15"></i>
<b class="t off"><svg><use href="#tag"/></svg></b><b class="t off"><svg><use href="#diag"/></svg></b><i class="sep"></i><b class="t"><svg><use href="#tagblue"/></svg></b><b class="t"><svg><use href="#tagred"/></svg></b><i class="sep"></i><b class="t off"><svg><use href="#tagpin"/></svg></b><b class="t off"><svg><use href="#tageye"/></svg></b><b class="t off"><svg><use href="#tagmove"/></svg></b><b class="t off"><svg><use href="#tagrot"/></svg></b><b class="t off"><svg><use href="#tagedit"/></svg></b><i class="grip"></i>
<b class="t"><svg><use href="#earthadd"/></svg></b><b class="t on"><svg><use href="#earthfind"/></svg></b><b class="t"><svg><use href="#binoc"/></svg></b><i class="grip"></i><b class="t"><svg><use href="#pyc"/></svg></b><b class="t"><svg><use href="#osmf"/></svg></b><i class="grip"></i><b class="t"><svg><use href="#help"/></svg></b><i class="grip"></i>
</div>
<div class="bar bar3"><i class="grip"></i><b class="t"><svg><use href="#hlayers"/></svg></b><i class="dd"></i><b class="t"><svg><use href="#hgear"/></svg></b><b class="t"><svg><use href="#hmag"/></svg></b><b class="t"><svg><use href="#hfull"/></svg></b></div>

<main class="main">
<aside class="left">
<section class="dock browser">
<div class="dhead"><span>浏览器</span><svg><use href="#float"/></svg><svg><use href="#closeb"/></svg></div>
<div class="dtools"><b><svg><use href="#addsq"/></svg></b><b><svg><use href="#refresh"/></svg></b><b><svg><use href="#filter"/></svg></b><b><svg><use href="#collapse"/></svg></b><b><svg><use href="#info"/></svg></b></div>
<div class="treebox"><ul class="tree">
<li><i class="ex r"></i><svg><use href="#folder"/></svg>E:\ (软件)</li>
<li><i class="ex"></i><svg><use href="#gpkgs"/></svg>GeoPackage</li>
<li><i class="ex"></i><svg><use href="#feather"/></svg>SpatiaLite</li>
<li><i class="ex"></i><svg><use href="#pg"/></svg>PostgreSQL</li>
<li><i class="ex"></i><svg><use href="#hana"/></svg>SAP HANA</li>
<li><i class="ex r"></i><svg><use href="#mssql"/></svg>MS SQL 服务器</li>
<li><i class="ex r"></i><svg><use href="#ora"/></svg>Oracle</li>
<li><i class="ex"></i><svg><use href="#globe"/></svg>WMS/WMTS</li>
<li><i class="ex"></i><svg><use href="#vt"/></svg>Vector Tiles</li>
<li><i class="ex d"></i><svg><use href="#xyz"/></svg>XYZ Tiles</li>
<li class="sub"><svg><use href="#xyz"/></svg>Carto Dark</li>
<li class="sub"><svg><use href="#xyz"/></svg>Carto Light</li>
<li class="sub"><svg><use href="#xyz"/></svg>Esri Dark Gray</li>
<li class="sub"><svg><use href="#xyz"/></svg>Esri Terrain</li>
<li class="sub"><svg><use href="#xyz"/></svg>Mapzen Global Terrain</li>
<li class="sub hot"><svg><use href="#xyz"/></svg>OpenStreetMap</li>
<li class="sub"><svg><use href="#xyz"/></svg>Stamen Terrain</li>
<li><i class="ex"></i><svg><use href="#wcs"/></svg>WCS</li>
<li><i class="ex"></i><svg><use href="#wfs"/></svg>WFS / OGC API - Features</li>
</ul><div class="scroll"><i class="sb up"></i><i class="groove ga"></i><i class="thumb"></i><i class="groove gb"></i><i class="sb dn"></i></div></div>
</section>
<i class="split"></i>
<section class="dock layers">
<div class="dhead"><span>图层</span><svg><use href="#float"/></svg><svg><use href="#closeb"/></svg></div>
<div class="dtools"><b><svg><use href="#brush"/></svg></b><b><svg><use href="#group"/></svg></b><b class="m"><svg><use href="#eye"/></svg></b><b class="m"><svg><use href="#filter"/></svg></b><b class="off"><svg><use href="#eps"/></svg></b><i class="dd off"></i><b><svg><use href="#expand"/></svg></b><b><svg><use href="#collapse"/></svg></b><b><svg><use href="#remsq"/></svg></b></div>
<div class="treebox"><ul class="tree lay">
<li class="cur"><i class="ex r"></i><i class="cb ck"></i><svg><use href="#raster"/></svg><span><u>已裁剪（掩膜）</u></span><em class="memb"><svg><use href="#mem"/></svg></em></li>
<li><i class="ex"></i><i class="cb"></i><i class="sw red"></i><span class="cjk">河南</span></li>
<li><i class="ex r"></i><i class="cb"></i><svg><use href="#raster"/></svg><span>10_DEM_y30x110</span></li>
<li><i class="ex"></i><i class="cb"></i><i class="sw pink"></i><span>CN</span></li>
<li><i class="ex r"></i><i class="cb"></i><svg><use href="#raster"/></svg><span>Esri Terrain</span></li>
<li><i class="ex d"></i><i class="cb"></i><svg><use href="#raster"/></svg><span>OpenStreetMap</span></li>
</ul></div>
</section>
</aside>
<section class="canvas">
<svg class="dem" viewBox="0 0 930 870">
<defs>
<clipPath id="prov"><path d="M498 48L540 52 545 62 580 66 610 80 640 84 656 84 660 96 685 72 700 74 706 84 730 78 728 100 714 104 716 138 745 118 812 88 814 96 800 108 760 130 730 150 716 180 700 198 672 208 660 236 648 246 650 268 690 270 725 296 735 332 765 340 805 332 826 348 830 370 858 386 876 388 874 410 886 440 870 448 855 460 824 472 802 436 790 430 780 422 760 420 745 432 748 450 742 465 750 475 748 498 715 502 712 535 708 568 690 578 658 570 662 592 692 612 692 655 722 660 750 680 788 672 792 735 788 780 760 784 730 800 718 826 708 842 700 838 696 815 684 812 680 828 650 832 625 820 610 812 612 792 590 784 560 776 535 782 512 768 502 740 504 720 498 682 484 690 456 702 436 686 425 682 400 688 370 690 340 692 310 694 285 684 262 668 235 660 210 650 190 625 172 610 158 580 136 556 134 505 112 482 100 460 80 450 86 432 82 405 62 388 70 370 52 358 50 336 90 334 120 325 155 305 190 298 215 282 250 258 275 258 276 226 300 234 356 234 375 232 410 212 440 200 470 190 474 172 482 165 490 150 494 100z"/></clipPath>
<filter id="rough" x="-5%" y="-5%" width="110%" height="110%" color-interpolation-filters="sRGB"><feTurbulence type="fractalNoise" baseFrequency=".08" numOctaves="2" seed="4" result="n"/><feDisplacementMap in="SourceGraphic" in2="n" scale="17" xChannelSelector="R" yChannelSelector="G"/></filter>
<filter id="soft" x="-20%" y="-20%" width="140%" height="140%" color-interpolation-filters="sRGB"><feGaussianBlur stdDeviation="13"/></filter>
<filter id="fine" color-interpolation-filters="sRGB"><feGaussianBlur stdDeviation="3"/></filter>
<filter id="relief" x="0" y="0" width="100%" height="100%" color-interpolation-filters="sRGB"><feTurbulence type="fractalNoise" baseFrequency=".06 .075" numOctaves="5" seed="8"/><feColorMatrix values="0 0 0 0 .9  0 0 0 0 .9  0 0 0 0 .9  3.800 0 0 0 -1.500"/></filter>
<mask id="hills" maskUnits="userSpaceOnUse" x="0" y="0" width="930" height="870"><g filter="url(#soft)" fill="none" stroke="#fff" stroke-linecap="round">
<path d="M60 370L100 440 170 350 300 270" stroke-width="44" stroke="#666"/><path d="M100 440Q190 450 270 480T330 475" stroke-width="34"/><path d="M150 430Q220 400 260 370" stroke-width="14"/><path d="M150 480Q230 510 290 550" stroke-width="40"/><path d="M370 350Q430 330 490 380" stroke-width="18" stroke="#aaa"/><path d="M270 420L350 440" stroke-width="50" stroke="#777"/><path d="M510 90L530 170" stroke-width="38" stroke="#777"/><path d="M400 222L470 186M290 238L330 250" stroke-width="12" stroke="#aaa"/><path d="M150 540L200 610" stroke-width="44" stroke="#666"/><path d="M440 560L510 640" stroke-width="24" stroke="#777"/><path d="M510 750L620 810 700 830 735 790" stroke-width="18" stroke="#999"/><path d="M370 510L450 580" stroke-width="14" stroke="#777"/></g></mask>
</defs>
<g filter="url(#rough)"><g clip-path="url(#prov)"><path d="M0 0h930v870H0z" fill="#030303"/>
<g filter="url(#soft)" fill="none" stroke-linecap="round"><path d="M70 390L170 360 310 290" stroke="#606060" stroke-width="64"/><path d="M90 430L180 455 330 480" stroke="#777" stroke-width="40"/><path d="M160 400L260 370" stroke="#555" stroke-width="30"/><path d="M160 500L290 540" stroke="#444" stroke-width="40"/><path d="M300 410L480 370" stroke="#2c2c2c" stroke-width="50"/><path d="M520 80v90" stroke="#333" stroke-width="40"/></g>
<g mask="url(#hills)"><rect width="930" height="870" filter="url(#relief)" opacity=".62"/></g>
<g filter="url(#fine)" fill="none" stroke="#080808" stroke-width="8" opacity=".8"><path d="M110 435Q170 380 220 355T390 300M140 430Q230 420 290 380 320 340 390 310" stroke-width="10"/><path d="M110 445Q250 480 430 465M150 490Q200 500 280 590M52 345q60 10 90-10M90 400q30-30 40-60M210 450l-10-40M300 500l-30-60M240 470l20 60"/></g></g></g>
</svg>
</section>
<aside class="right">
<div class="dhead"><span>工具箱</span><svg><use href="#float"/></svg><svg><use href="#closeb"/></svg></div>
<div class="dtools"><b class="m"><svg><use href="#gears"/></svg></b><b class="m"><svg><use href="#python"/></svg></b><b><svg><use href="#clock2"/></svg></b><b><svg><use href="#doc"/></svg></b><i class="sep"></i><b class="off"><svg><use href="#editsh"/></svg></b><i class="sep"></i><b><svg><use href="#wrench"/></svg></b></div>
<div class="field rsearch"></div>
<div class="rtree"><div class="scroll"><i class="sb up"></i><i class="thumb"></i><i class="groove rg"></i><i class="sb dn"></i></div></div>
<div class="dhead r2"><span></span><svg><use href="#float"/></svg><svg><use href="#closeb"/></svg></div>
<div class="field"></div><div class="field rcombo"><i class="tri"></i></div>
<div class="rlist"></div>
<div class="news"><svg><use href="#bell"/></svg><p class="mono"><a>Download geodata</a> for your project</p></div>
</aside>
</main>

<footer class="status">
<div class="field find"><svg><use href="#srch"/></svg>搜索<span class="mono hint">(Ctrl+K)</span></div>
<span class="s1">坐标</span><div class="field mono f1">12042669,4570383</div><svg class="k1"><use href="#mouse"/></svg>
<span class="s2">比例</span><div class="field mono f2">1:9486259<i class="btn"><i class="tri"></i></i></div><svg class="k2"><use href="#lock"/></svg>
<span class="s3">放大镜</span><div class="field mono f3">100%<i class="spin"></i></div>
<span class="s4">旋转角度</span><div class="field mono f4">0.0°<i class="spin"></i></div>
<i class="cb ck"></i><span class="s5">渲染</span><svg class="k3"><use href="#crs"/></svg><span class="mono s6">EPSG:3857</span><svg class="k4"><use href="#bubble"/></svg>
</footer>

<div class="dialog">
<div class="dlgtitle"><svg class="logo"><use href="#logo"/></svg><span>地图另存为图像</span><svg class="x" viewBox="0 0 12 12"><path d="M1 1l10 10M11 1L1 11" stroke="#000" stroke-width="1.100"/></svg></div>
<div class="dlgbody">
<div class="ghead"><i></i>范围（当前：用户定义的）</div>
<div class="gbox">
<div class="grow c"><label>北</label><div class="field mono w">5064834.0184</div></div>
<div class="grow two"><label>西</label><div class="field mono w">11661163.5182</div><label class="e">东</label><div class="field mono w">13839762.0417</div></div>
<div class="grow c"><label>南</label><div class="field mono w">3167344.9819</div></div>
<div class="grow calc"><label>计算从</label><button class="pb act">图层<i class="tri"></i></button><button class="pb lm">布局地图<i class="tri"></i></button><button class="pb">书签<i class="tri"></i></button></div>
<div class="grow calc2"><button class="pb">地图画布范围</button><button class="pb">在画布上绘制</button></div>
</div>
<div class="frow fr1"><label>比例</label><div class="field"><span class="mono">1:9486259</span><i class="btn"><i class="tri"></i></i></div><button class="pb xb"><svg><use href="#extent"/></svg></button><button class="pb xs"><i class="tri"></i></button></div>
<div class="frow fr2"><label>分辨率</label><div class="field"><span class="mono">300 dpi</span><i class="spin"></i></div></div>
<div class="pair"><div class="pcol">
<div class="frow fr3"><label>输出宽度</label><div class="field"><span class="mono">2713</span>像素<i class="spin"></i></div></div>
<div class="frow fr3"><label>输出高度</label><div class="field"><span class="mono">2363</span>像素<i class="spin"></i></div></div>
</div><svg class="ratio" viewBox="0 0 14 48"><path d="M0 6h7v7M0 43h7v-7" fill="none" stroke="#999" stroke-width="2"/><use href="#unlock" x="1" y="16" width="13" height="18"/></svg></div>
<div class="chk"><i class="cb"></i>绘制活动装饰：无</div>
<div class="chk"><i class="cb"></i>绘制注记</div>
<div class="chk"><i class="cb"></i>附加配准信息（嵌入或者借助于坐标信息文件）</div>
<div class="dlgbtns"><button class="pb cp">复制到剪贴板</button><i></i><button class="pb mono">Save</button><button class="pb mono">Cancel</button><button class="pb mono">Help</button></div>
</div>
</div>

<ul class="popup">
<li><svg><use href="#raster"/></svg>10_DEM_y30x110</li><li><svg class="pl"><use href="#polyi"/></svg>河南</li><li class="sel"><svg><use href="#raster"/></svg>已裁剪（掩膜）</li><li><svg class="pl"><use href="#polyi"/></svg>CN</li><li><svg><use href="#raster"/></svg>Esri Terrain</li><li><svg><use href="#raster"/></svg>OpenStreetMap</li>
</ul>
<svg class="marks" viewBox="0 0 1609 957"><g fill="none" stroke="#ed1c24" stroke-width="2"><path d="M15 636h166v23H15zM1037 468h70v26h-70zM985 549h48v99h-48z"/></g>
<g fill="#ed1c24"><path d="M198 650l24-2-5 5.500 79 33.500-1 1.500-81-28.500 1 7zM1036 433l17 14 3-4 5 22-21-11 5-3zM1378 448l16-17 1.500 5 31.500-11v2l-30 17 4 5zM953 541l7-5-1-5 20 18-26 1 5-4z"/></g></svg>
<p class="note">选中图层，计算范围。默认是编辑器可视范围</p>
</div>
</body>
</html>
```
FILE: styles.css
```css
* { box-sizing: border-box; }
body { margin: 0; background: #3a3d4c; font: 12px/15px "Noto Sans", "Noto Sans CJK SC", sans-serif; color: #000; overflow: hidden; }
ul, p { margin: 0; padding: 0; list-style: none; }
i, em { font-style: normal; display: block; flex: none; }
svg { display: block; flex: none; }
.defs { position: absolute; width: 0; height: 0; visibility: hidden; }
.mono { font-family: "Liberation Mono", "Noto Sans CJK SC", monospace; font-size: 12px; letter-spacing: -1.2px; }
.window { position: relative; width: 1607px; height: 955px; margin: 1px; display: flex; flex-direction: column; background: #efefef; }

.titlebar { height: 30px; flex: none; background: #fff; display: flex; align-items: center; padding: 0 17px 1px 8px; color: #999; }
.logo { width: 16px; height: 16px; margin-right: 5px; }
.wtitle { flex: 1; font-size: 12.6px; }
.winctl { width: 103px; height: 12px; }
.menu { height: 21px; flex: none; display: grid; grid-template-columns: 51px 53px 54px 52px 53px 53px 56px 54px 67px 61px 58px 78px 63px 50px; padding-left: 10px; align-items: center; color: #9a9a9a; white-space: nowrap; }

.bar { height: 39px; flex: none; display: flex; align-items: center; border-top: 1px solid #b4b4b4; background: linear-gradient(#fafafa, #eee); }
.bar1 { border-top-color: #d4d4d4; }
.bar3 { height: 38px; }
.t { width: 33px; height: 31px; flex: none; display: flex; align-items: center; justify-content: center; }
.t.wide { width: 34px; }
.t svg { width: 24px; height: 24px; }
.t.on { width: 32px; margin-right: 1px; border: 1px solid #a6a6a6; border-radius: 3px; background: #dadada; }
.off svg { opacity: .32; filter: grayscale(.6); }
.grip { width: 16px; height: 18px; background: repeating-linear-gradient(#efefef00 0 1px, #f6f6f6 1px 3px), linear-gradient(90deg, transparent 6px, #aaa 6px 7px, transparent 7px 9px, #aaa 9px 10px, transparent 10px); }
.bar > .grip:first-child { width: 12px; background-position: -1px 0; }
.grip.g15 { width: 15px; }
.grip.g17 { width: 17px; }
.dd { width: 12px; height: 5px; background: #555; clip-path: polygon(2px 0, 10px 0, 6px 4px); }
.dd.off { background: #aaa; }
.sep { width: 7px; height: 20px; border-left: 1px solid #ccc; margin-left: 3px; margin-right: -3px; }

.main { flex: 1; min-height: 0; display: flex; border-top: 1px solid #b4b4b4; }
.left { width: 336px; flex: none; display: flex; flex-direction: column; padding-right: 6px; }
.dhead { height: 24px; flex: none; display: flex; align-items: center; padding: 0 1px 2px 4px; }
.dhead span { flex: 1; }
.dhead svg { width: 12px; height: 12px; margin-left: 2px; }
.dtools { height: 27px; flex: none; display: flex; align-items: center; padding: 0 0 6px 3px; }
.dtools b { width: 25px; height: 20px; display: flex; align-items: center; justify-content: center; position: relative; }
.dtools svg { width: 15px; height: 15px; }
.dtools b.m::after { content: ""; position: absolute; right: 0; bottom: 1px; border: 3px solid transparent; border-top-color: #555; border-bottom: 0; }
.treebox { flex: 1; min-height: 0; display: flex; border: 1px solid #b4b4b4; border-left: 0; background: #fff; }
.browser { height: 413px; flex: none; display: flex; flex-direction: column; }
.layers { flex: 1; min-height: 0; display: flex; flex-direction: column; }
.split { height: 4px; margin: 1px 0 0; width: 16px; align-self: center; border-top: 1px dotted #aaa; }
.tree { flex: 1; overflow: hidden; }
.tree li { height: 19px; display: flex; align-items: center; font-size: 12.4px; white-space: pre; padding-left: 5px; letter-spacing: .12px; }
.tree li > svg { width: 16px; height: 16px; margin-right: 6px; }
.tree li.sub { padding-left: 36px; }
.tree li.hot { width: 195px; background: #efefef; }
.ex { width: 15px; height: 9px; }
.ex.r { background: #555; clip-path: polygon(2px 0, 6px 4px, 2px 8px); }
.ex.d { background: #555; clip-path: polygon(0 2px, 8px 2px, 4px 7px); }
.scroll { width: 14px; flex: none; display: flex; flex-direction: column; border-left: 1px solid #b4b4b4; }
.sb { height: 14px; position: relative; border-bottom: 1px solid #b4b4b4; background: #fafafa; }
.sb::after { content: ""; position: absolute; left: 3px; top: 4px; border: 4px solid transparent; border-bottom-color: #555; border-top: 0; }
.sb.dn { border-bottom: 0; border-top: 1px solid #b4b4b4; }
.sb.dn::after { border: 4px solid transparent; border-top-color: #555; border-bottom: 0; }
.groove { background: #e4e4e4; }
.thumb { flex: 1; background: linear-gradient(90deg, #fff, #f4f4f4); }
.ga { height: 74px; border-bottom: 1px solid #b4b4b4; }
.gb { height: 37px; border-top: 1px solid #b4b4b4; }
.rg { height: 49px; border-top: 1px solid #b4b4b4; }
.layers .dhead { height: 19px; padding-bottom: 0; }
.layers .dtools { height: 32px; padding-bottom: 2px; }
.tree.lay li { color: #777; font-weight: bold; font-style: italic; padding-left: 9px; font-size: 12.8px; }
.lay .ex { margin-left: -2px; margin-right: 2px; }
.tree.lay li > svg { width: 14px; height: 14px; margin: 0 7px 0 1px; }
.tree.lay li.cur { background: #efefef; color: #000; font-style: normal; padding-right: 9px; font-size: 12px; letter-spacing: 0; }
.lay .cur span { flex: 1; }
.tree .cjk { font-weight: 400; font-size: 12.4px; }
u { text-underline-offset: 2px; }
.cb { width: 14px; height: 14px; background: #fff; border: 1px solid #b4b4b4; position: relative; }
.lay .cb { margin-right: 6px; }
.cb.ck::after { content: ""; position: absolute; left: 4px; top: 1px; width: 4px; height: 8px; border: solid #000; border-width: 0 2px 2px 0; transform: rotate(35deg); }
.lay .sw { width: 16px; height: 16px; margin-right: 6px; }
.red { border: 2px solid #e8262b; }
.pink { background: #f4a3b1; border: 1px solid #8c6870; }
.memb { border: 1px solid #d4d4d4; width: 18px; height: 17px; background: #f6f6f6; }
.memb svg { width: 16px; height: 15px; }

.canvas { width: 870px; flex: none; margin: 1px 0 0; border: 1px solid #b4b4b4; background: #fff; padding: 269px 0 0 232px; overflow: hidden; }
.dem { width: 310px; height: 290px; }
.right { flex: 1; margin-left: 6px; display: flex; flex-direction: column; }
.field { height: 22px; border: 1px solid #ababab; border-radius: 3px; background: #fff; position: relative; display: flex; align-items: center; padding-left: 2px; white-space: nowrap; flex: none; }
.field.mono, .field .mono { padding-top: 1px; }
.rsearch { margin-bottom: 1px; }
.rtree { height: 438px; flex: none; border: 1px solid #b4b4b4; display: flex; justify-content: flex-end; }
.right .r2 { height: 25px; padding-top: 4px; }
.rcombo { margin-top: 6px; background: linear-gradient(#fff, #eee); justify-content: flex-end; padding-right: 7px; }
.tri { border: 4px solid transparent; border-top-color: #555; border-bottom: 0; width: 0; height: 0; }
.rlist { height: 125px; margin-top: 6px; border: 1px solid #b4b4b4; background: #fff; }
.news { height: 32px; margin-top: 5px; border: 1px solid #b4b4b4; display: flex; align-items: center; padding: 6px 0 0 80px; }
.news svg { width: 12px; height: 14px; margin: -4px 21px 0 0; }
.news a { color: #00e; text-decoration: underline; }

.status { height: 29px; flex: none; display: flex; align-items: center; padding: 1px 0 0 4px; white-space: nowrap; }
.find { width: 200px; margin-right: 608px; color: #777; padding-left: 8px; }
.find svg { width: 13px; height: 13px; margin-right: 7px; }
.hint { margin-left: 6px; }
.s1 { width: 25px; } .s2 { width: 25px; } .s3 { width: 36px; } .s4 { width: 53px; } .s5 { width: 41px; padding-left: 5px; } .s6 { width: 84px; }
.f1 { width: 111px; padding-left: 6px; } .f2 { width: 83px; padding-left: 3px; } .f3 { width: 88px; margin-right: 10px; padding-left: 4px; } .f4 { width: 89px; margin-right: 5px; padding-left: 4px; }
.k1 { width: 17px; height: 17px; margin: 0 13px 0 3px; }
.k2 { width: 14px; height: 18px; margin: 0 8px 0 11px; }
.k3 { width: 16px; height: 16px; margin-right: 2px; }
.k4 { width: 17px; height: 17px; }
.spin { position: absolute; right: 0; top: 0; bottom: 0; width: 14px; border-left: 1px solid #b4b4b4; }
.spin::before, .spin::after { content: ""; position: absolute; left: 3px; border: 4px solid transparent; }
.spin::before { top: 4px; border-bottom-color: #555; border-top: 0; }
.spin::after { bottom: 4px; border-top-color: #555; border-bottom: 0; }
.btn { position: absolute; right: 0; top: 0; bottom: 0; width: 20px; border-left: 1px solid #b4b4b4; display: flex; align-items: center; justify-content: center; background: linear-gradient(#fff, #f4f4f4); }

.dialog { position: absolute; left: 978px; top: 223px; width: 602px; height: 661px; border: 1px solid #6d6d6d; background: #efefef; box-shadow: 0 4px 14px 2px rgba(0,0,0,.32); display: flex; flex-direction: column; }
.dlgtitle { height: 30px; flex: none; background: #fff; display: flex; align-items: center; padding: 0 9px 2px 8px; }
.dlgtitle span { flex: 1; }
.dlgtitle .x { width: 12px; height: 12px; }
.dlgbody { flex: 1; padding: 10px 11px 11px 11px; display: flex; flex-direction: column; }
.ghead { height: 19px; font-weight: bold; display: flex; align-items: center; padding: 0 0 1px 2px; letter-spacing: .62px; font-size: 12.4px; }
.ghead i { border: 6px solid transparent; border-top: 7px solid #444; border-bottom: 0; margin: 2px 9px 0 0; }
.gbox { height: 150px; border: 1px solid #d2d2d2; border-radius: 2px; background: #ececec; display: flex; flex-direction: column; padding: 8px 0 0 1px; margin-bottom: 7px; }
.grow { height: 22px; display: flex; align-items: center; margin-bottom: 6px; flex: none; }
.grow .w { width: 174px; }
.grow.c label { margin-left: 191px; width: 18px; }
.grow.two label { margin-left: 9px; width: 19px; }
.grow.two label.e { margin-left: 168px; width: 19px; }
.grow.calc { height: 20px; margin-left: 140px; gap: 6px; }
.calc label { width: 36px; }
.pb { font: inherit; height: 20px; border: 1px solid #a8a8a8; border-radius: 3px; background: linear-gradient(#fefefe, #efefef); padding: 0; display: flex; align-items: center; justify-content: center; position: relative; color: #000; white-space: nowrap; }
.pb.mono { font: 12px "Liberation Mono", monospace; letter-spacing: -1.2px; }
.calc .pb { width: 80px; padding-right: 14px; }
.calc .lm { padding-right: 8px; }
.calc .tri { position: absolute; right: 4px; top: 8px; border-width: 3px 3px 0; }
.pb.act { background: #d1d7db; border-color: #4aa6f0; }
.calc2 { margin-left: 140px; margin-top: -1px; gap: 6px; }
.calc2 .pb { width: 144px; }
.frow { display: flex; align-items: center; flex: none; height: 20px; margin-bottom: 8px; }
.frow label { width: 54px; }
.frow .field { flex: 1; height: 20px; padding-left: 3px; }
.frow.fr1 { height: 22px; }
.frow.fr1 .field { height: 22px; flex: none; width: 481px; padding-left: 3px; }
.xb { width: 24px; height: 23px; margin-left: 7px; border-radius: 3px 0 0 3px; }
.xb svg { width: 17px; height: 15px; }
.xs { width: 12px; height: 23px; border-radius: 0 3px 3px 0; }
.pair { display: flex; flex: none; height: 52px; }
.pcol { width: 552px; }
.ratio { width: 14px; height: 48px; margin-left: 7px; }
.chk { height: 24px; display: flex; align-items: center; }
.chk .cb { margin-right: 5px; }
.dlgbtns { margin-top: auto; display: flex; gap: 6px; }
.dlgbtns i { flex: 1; }
.dlgbtns .pb { width: 80px; }

.popup { position: absolute; left: 1174px; top: 396px; width: 196px; height: 150px; background: #fff; border: 1px solid #808080; box-shadow: 3px 3px 3px rgba(0,0,0,.4); display: grid; grid-template-rows: repeat(6, 1fr); }
.popup li { display: flex; align-items: center; padding: 0 0 1px 6px; font-size: 12.4px; }
.popup svg { width: 14px; height: 14px; margin: 0 6px 0 1px; }
.popup svg.pl { width: 16px; height: 14px; margin: 0 5px 0 0; }
.popup .sel { background: #0078d7; color: #fff; border: solid #3aa0f0; border-width: 1px 0; }
.marks { position: absolute; left: -1px; top: -1px; width: 1609px; height: 957px; pointer-events: none; }
.note { position: absolute; left: 1160px; top: 556px; font-size: 15px; line-height: 20px; color: #ed1c24; white-space: nowrap; }
```
